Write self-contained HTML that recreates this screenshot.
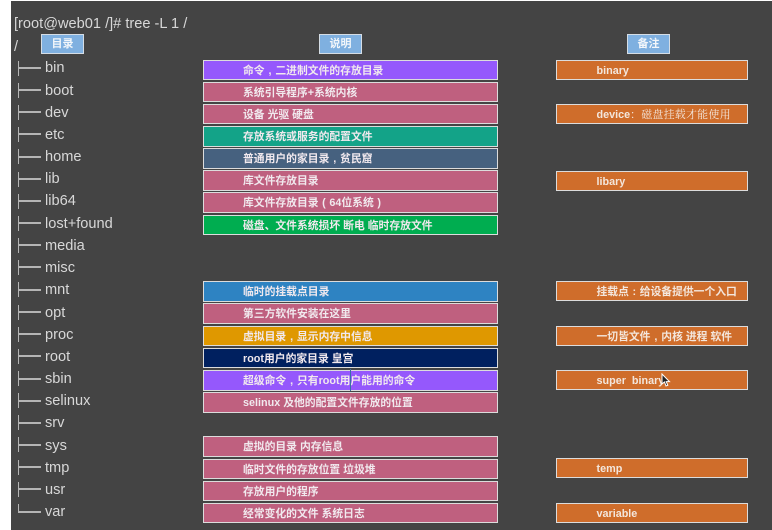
<!DOCTYPE html>
<html lang="zh-CN">
<head>
<meta charset="utf-8">
<style>
html,body{margin:0;padding:0;background:#fff;}
body{width:772px;height:530px;overflow:hidden;position:relative;}
#t{position:absolute;left:11px;top:1px;width:761px;height:529px;background:#444;}
#w{position:absolute;left:0;top:0;width:772px;height:530px;filter:blur(.35px);font-family:"Liberation Sans","Noto Sans CJK SC",sans-serif;}
.x{position:absolute;color:#d8d8d8;font-size:14.6px;line-height:18px;white-space:nowrap;left:45px;margin-top:1px;}
.v{position:absolute;left:17.5px;width:1.5px;height:15px;background:#b5b5b5;margin-top:-1.5px;}
.h{position:absolute;left:18px;width:22.5px;height:1.5px;background:#b5b5b5;margin-top:0;}
.b{position:absolute;left:203px;width:293px;height:18.5px;border:1.5px solid #dcdcdc;line-height:20px;font-size:10.8px;font-weight:700;color:#f1e9ee;white-space:nowrap;text-indent:39px;}
.o{position:absolute;left:556px;width:190px;height:18px;border:1.5px solid #dcdcdc;line-height:20px;font-size:10.8px;font-weight:700;color:#f3e6dc;white-space:nowrap;text-indent:39.5px;background:#cf6d2b;}
.k{position:absolute;top:34px;width:41px;height:17.5px;border:1.5px solid #d5dde5;background:#7fb0e0;color:#f2f6fa;font-size:11px;font-weight:700;line-height:18px;text-align:center;}
i{font-style:normal;display:inline-block;width:1em;text-align:center;text-indent:0;}
.p{background:#9558fc}.r{background:#bf607f}.g{background:#13a388}.s{background:#46617f}.n{background:#00ad50}.u{background:#2e83c2}.y{background:#df9800}.d{background:#00205f}
</style>
</head>
<body>
<div id="t"></div>
<div id="w">
<div class="x" style="left:14px;top:14px;">[root@web01 /]# tree -L 1 /</div>
<div class="x" style="left:14px;top:37px;">/</div>
<div class="k" style="left:41px;">目录</div>
<div class="k" style="left:319px;">说明</div>
<div class="k" style="left:627px;">备注</div>

<div class="v" style="top:62px"></div><div class="h" style="top:67px"></div><div class="x" style="top:58px">bin</div>
<div class="v" style="top:84px"></div><div class="h" style="top:89px"></div><div class="x" style="top:81px">boot</div>
<div class="v" style="top:106px"></div><div class="h" style="top:111px"></div><div class="x" style="top:103px">dev</div>
<div class="v" style="top:128px"></div><div class="h" style="top:133px"></div><div class="x" style="top:125px">etc</div>
<div class="v" style="top:150px"></div><div class="h" style="top:156px"></div><div class="x" style="top:147px">home</div>
<div class="v" style="top:173px"></div><div class="h" style="top:178px"></div><div class="x" style="top:169px">lib</div>
<div class="v" style="top:195px"></div><div class="h" style="top:200px"></div><div class="x" style="top:191px">lib64</div>
<div class="v" style="top:217px"></div><div class="h" style="top:222px"></div><div class="x" style="top:214px">lost+found</div>
<div class="v" style="top:239px"></div><div class="h" style="top:244px"></div><div class="x" style="top:236px">media</div>
<div class="v" style="top:261px"></div><div class="h" style="top:266px"></div><div class="x" style="top:258px">misc</div>
<div class="v" style="top:283px"></div><div class="h" style="top:289px"></div><div class="x" style="top:280px">mnt</div>
<div class="v" style="top:306px"></div><div class="h" style="top:311px"></div><div class="x" style="top:303px">opt</div>
<div class="v" style="top:328px"></div><div class="h" style="top:333px"></div><div class="x" style="top:325px">proc</div>
<div class="v" style="top:350px"></div><div class="h" style="top:355px"></div><div class="x" style="top:347px">root</div>
<div class="v" style="top:372px"></div><div class="h" style="top:378px"></div><div class="x" style="top:369px">sbin</div>
<div class="v" style="top:394px"></div><div class="h" style="top:400px"></div><div class="x" style="top:391px">selinux</div>
<div class="v" style="top:416px"></div><div class="h" style="top:422px"></div><div class="x" style="top:413px">srv</div>
<div class="v" style="top:438px"></div><div class="h" style="top:444px"></div><div class="x" style="top:436px">sys</div>
<div class="v" style="top:461px"></div><div class="h" style="top:466px"></div><div class="x" style="top:458px">tmp</div>
<div class="v" style="top:483px"></div><div class="h" style="top:488px"></div><div class="x" style="top:480px">usr</div>
<div class="v" style="top:505px;height:8px"></div><div class="h" style="top:511px"></div><div class="x" style="top:502px">var</div>

<div class="b p" style="top:59.5px">命令<i>,</i>二进制文件的存放目录</div>
<div class="b r" style="top:81.5px">系统引导程序+系统内核</div>
<div class="b r" style="top:103.5px">设备 光驱 硬盘</div>
<div class="b g" style="top:126px">存放系统或服务的配置文件</div>
<div class="b s" style="top:148px">普通用户的家目录<i>,</i>贫民窟</div>
<div class="b r" style="top:170px">库文件存放目录</div>
<div class="b r" style="top:192px">库文件存放目录<i>(</i>64位系统<i>)</i></div>
<div class="b n" style="top:214.5px">磁盘、文件系统损坏 断电 临时存放文件</div>
<div class="b u" style="top:281px">临时的挂载点目录</div>
<div class="b r" style="top:303px">第三方软件安装在这里</div>
<div class="b y" style="top:325.5px">虚拟目录<i>,</i>显示内存中信息</div>
<div class="b d" style="top:347.5px">root用户的家目录 皇宫</div>
<div class="b p" style="top:370px">超级命令<i>,</i>只有root用户能用的命令</div>
<div class="b r" style="top:392px">selinux 及他的配置文件存放的位置</div>
<div class="b r" style="top:436px">虚拟的目录 内存信息</div>
<div class="b r" style="top:458.5px">临时文件的存放位置 垃圾堆</div>
<div class="b r" style="top:480.5px">存放用户的程序</div>
<div class="b r" style="top:502.5px">经常变化的文件 系统日志</div>

<div style="position:absolute;left:350px;top:369px;width:1px;height:22px;background:#3a6ea5;"></div>

<div class="o" style="top:59.5px">binary</div>
<div class="o" style="top:104px">device<span style="font-weight:400;font-family:'Noto Serif CJK SC','Liberation Sans',serif;letter-spacing:.4px;">：磁盘挂载才能使用</span></div>
<div class="o" style="top:170.5px">libary</div>
<div class="o" style="top:281px">挂载点<i>:</i>给设备提供一个入口</div>
<div class="o" style="top:325.5px">一切皆文件<i>,</i>内核 进程 软件</div>
<div class="o" style="top:369.5px">super&nbsp; binary</div>
<div class="o" style="top:458px">temp</div>
<div class="o" style="top:502.5px">variable</div>

<svg style="position:absolute;left:661px;top:373px" width="10" height="14" viewBox="0 0 10 14"><path d="M1 1V11L3.5 9L5 13L6.8 12.2L5.2 8.6H8.5Z" fill="#222" stroke="#fff" stroke-width="1"/></svg>
</div>
</body>
</html>
